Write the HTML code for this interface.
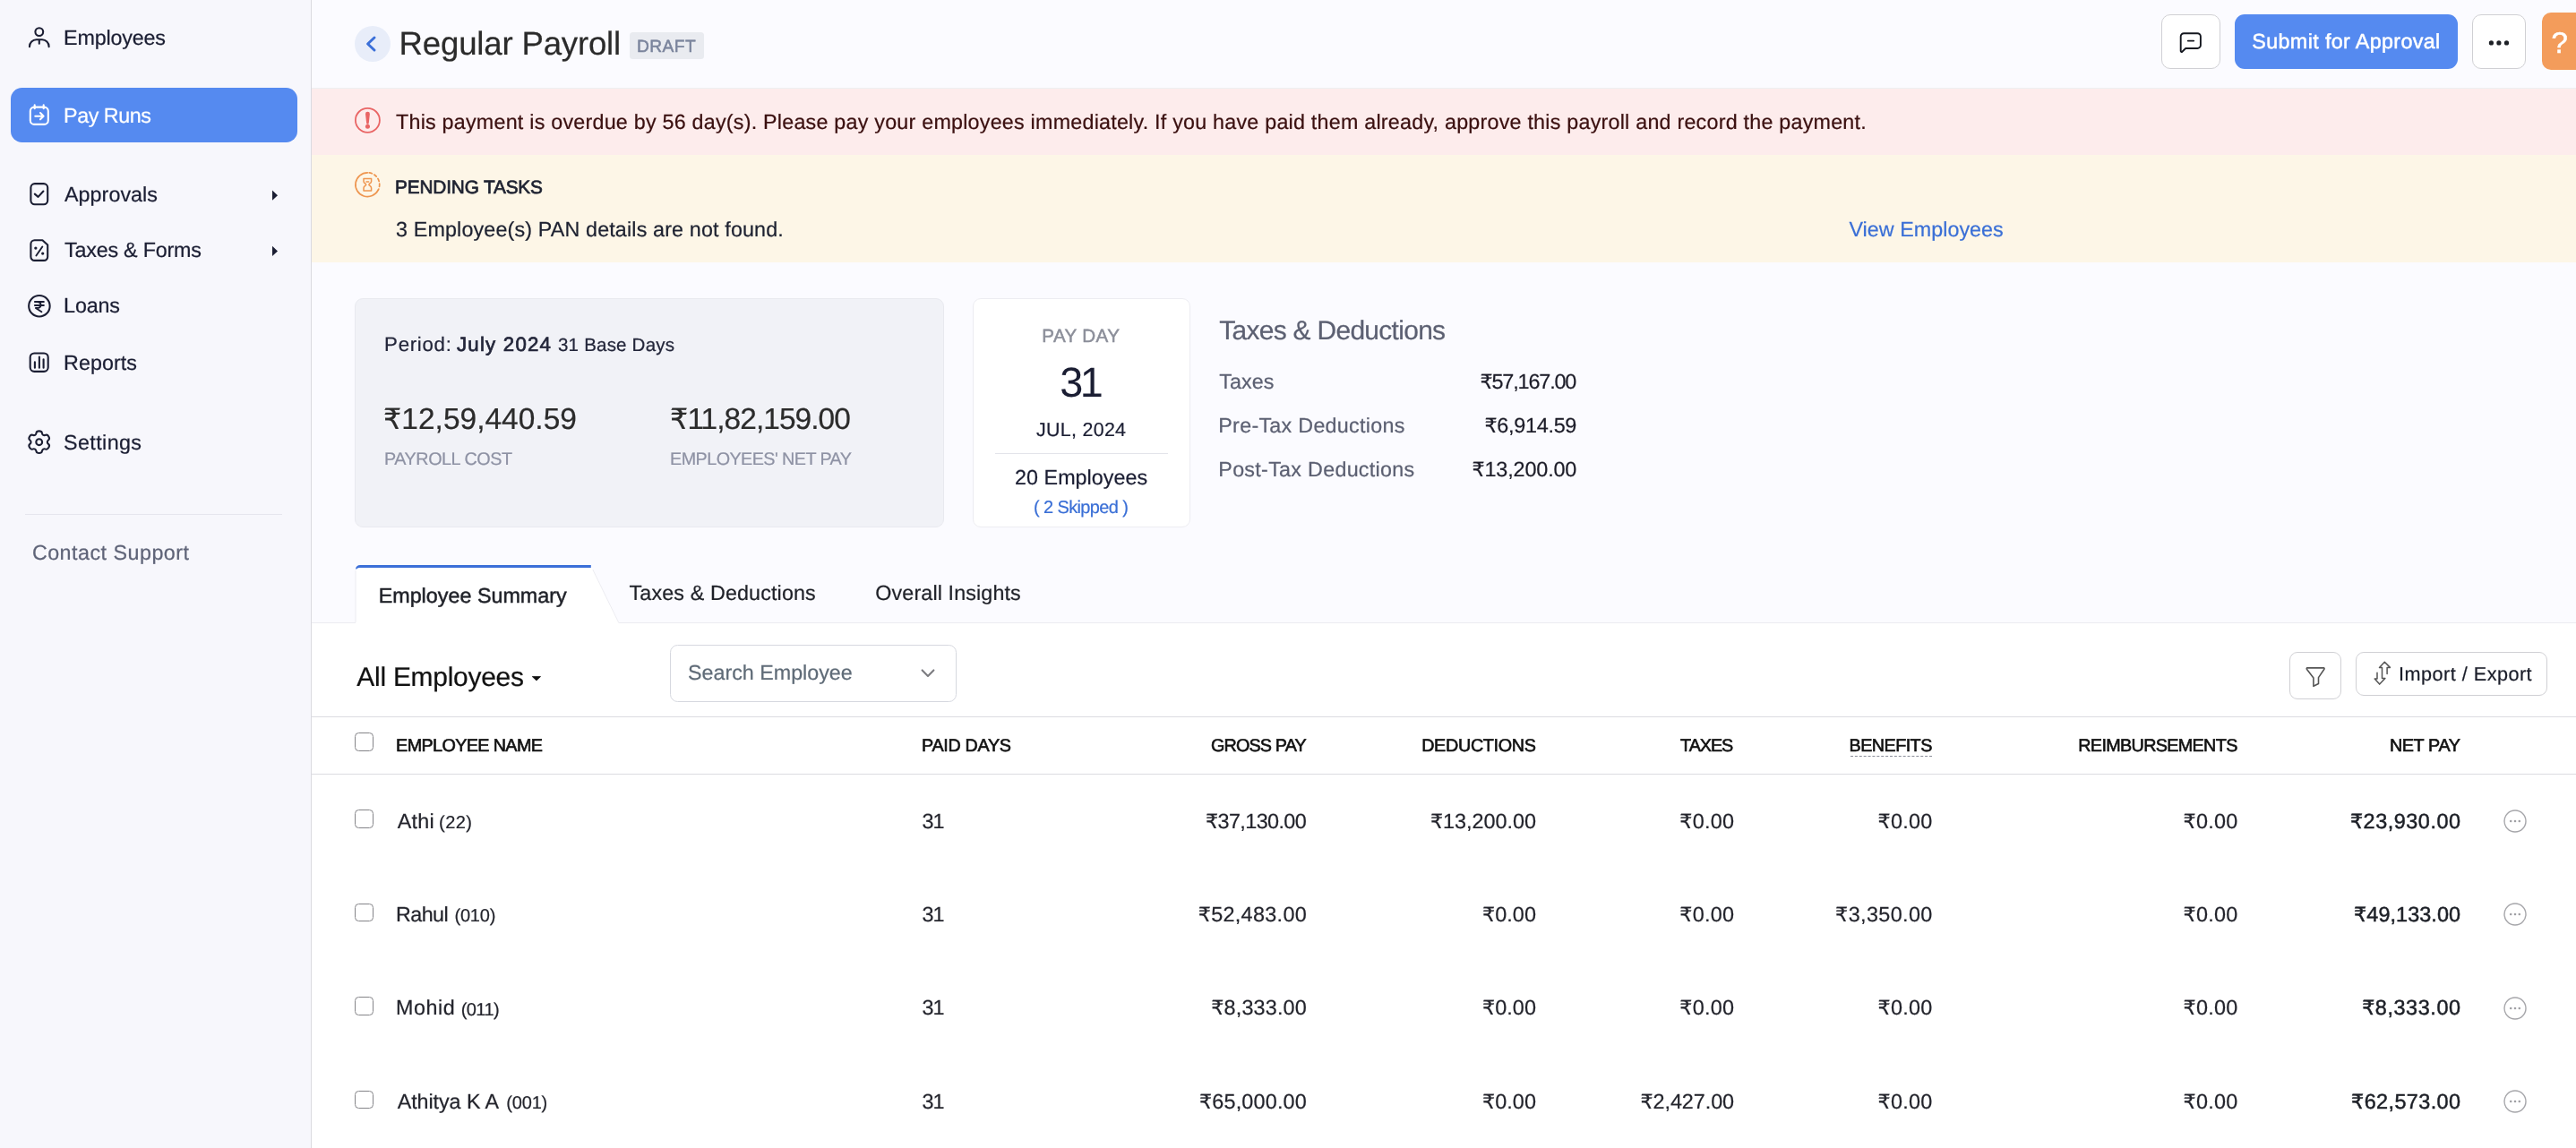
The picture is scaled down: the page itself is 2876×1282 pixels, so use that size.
<!doctype html>
<html lang="en"><head><meta charset="utf-8"><title>Regular Payroll</title>
<style>
*{box-sizing:border-box;margin:0;padding:0}
html,body{width:2876px;height:1282px;overflow:hidden;background:#fff}
@media (max-width:2000px){html{zoom:.5}}
body{font-family:"Liberation Sans", "DejaVu Sans", sans-serif;position:relative}
.grp{position:absolute;left:0;top:0;width:2876px;height:1282px;will-change:transform;pointer-events:none}
h1,h2,a,strong,em,button,label{font:inherit;color:inherit;text-decoration:none;background:none;border:0}
.t{position:absolute;white-space:nowrap;line-height:1;-webkit-text-stroke:.22px;text-rendering:geometricPrecision}
.r{font-family:"DejaVu Sans",sans-serif;font-size:.95em}

.b{position:absolute}
svg{position:absolute;overflow:visible}
.cb{position:absolute;width:20.6px;height:20.6px;border:1.9px solid #848488;border-radius:4.5px;background:#fff}
</style></head>
<body>
<div class="grp page-bg">
<div class="b" style="left:0px;top:0px;width:347px;height:1282px;background:#f7f7fc;"></div>
<div class="b" style="left:346.8px;top:0px;width:1.2px;height:1282px;background:#dadae0;"></div>
<div class="b" style="left:348px;top:0px;width:2528px;height:1282px;background:#fbfbff;"></div>
<div class="b" style="left:348px;top:695px;width:2528px;height:587px;background:#fff;"></div>
<div class="b" style="left:348px;top:172px;width:2528px;height:120.7px;background:#fdf6e7;"></div>
<div class="b" style="left:348px;top:98px;width:2528px;height:74.8px;background:#fdecec;"></div>
<div class="b" style="left:348.3px;top:97.6px;width:2528px;height:1px;background:#eef0f2;"></div>
<div class="b" style="left:348px;top:695px;width:2528px;height:1px;background:#ececf1;"></div>
</div>
<aside class="grp sidebar">
<div class="b" style="left:12px;top:98px;width:320px;height:61px;background:#558af0;border-radius:12.5px"></div>
<div class="b" style="left:28px;top:574px;width:287px;height:1px;background:#e6e6ee;"></div>
<svg style="left:30px;top:28px" width="28" height="28" viewBox="30 28 28 28"><g fill="none" stroke="#1b1e33" stroke-width="2.1" stroke-linecap="round" stroke-linejoin="round"><circle cx="43.8" cy="35.6" r="4.4"/><path d="M33 52.2v-.4a7.600 7.600 0 0 1 7.600-7.600h6.400a7.600 7.600 0 0 1 7.600 7.600v.4M43.800 44.400v4.400"/></g></svg>
<svg style="left:30px;top:114px" width="28" height="28" viewBox="30 114 28 28"><g fill="none" stroke="#fff" stroke-width="2.1" stroke-linecap="round" stroke-linejoin="round"><rect x="33.8" y="119.6" width="20" height="19.300" rx="4.400"/><path d="M38.700 117.400v3.800M48.700 117.400v3.800M39.300 129.700h9M45 126.100l3.600 3.600-3.600 3.600"/></g></svg>
<svg style="left:30px;top:202px" width="28" height="30" viewBox="30 202 28 30"><g fill="none" stroke="#1b1e33" stroke-width="2.1" stroke-linecap="round" stroke-linejoin="round"><rect x="34.4" y="205.1" width="18.800" height="23.100" rx="4.400"/><path d="M38.800 216.600l3.800 3.300 5.800-6.400"/></g></svg>
<svg style="left:30px;top:264px" width="28" height="30" viewBox="30 264 28 30"><g fill="none" stroke="#1b1e33" stroke-width="2.1" stroke-linecap="round" stroke-linejoin="round"><path d="M38.600 268.200h8.800l5.800 5.400v13.100a4.200 4.200 0 0 1-4.200 4.200h-10.400a4.200 4.200 0 0 1-4.200-4.200v-14.300a4.200 4.200 0 0 1 4.200-4.200z"/><path d="M47.300 275.500l-6.900 10" stroke-width="1.900"/></g><circle cx="39.850" cy="277.100" r="1.650" fill="#1b1e33"/><circle cx="47.700" cy="283.100" r="1.650" fill="#1b1e33"/></svg>
<svg style="left:30px;top:327px" width="28" height="30" viewBox="30 327 28 30"><g fill="none" stroke="#1b1e33" stroke-width="2.1" stroke-linecap="round" stroke-linejoin="round"><circle cx="43.900" cy="341.700" r="11.750"/><path d="M38.900 337h10M38.900 341h10M41.200 337c5.800 0 5.800 7 0 7h-1.300l6.500 4.300" stroke-width="1.900"/></g></svg>
<svg style="left:30px;top:390px" width="28" height="30" viewBox="30 390 28 30"><g fill="none" stroke="#1b1e33" stroke-width="2.1" stroke-linecap="round" stroke-linejoin="round"><rect x="33.700" y="394.500" width="20" height="20.400" rx="4.600"/><path d="M38.900 410.800v-6.400M43.900 410.800v-12.200M48.600 410.800v-9.600"/></g></svg>
<svg style="left:30px;top:479px" width="28" height="30" viewBox="30 479 28 30"><g fill="none" stroke="#1b1e33" stroke-width="2.1" stroke-linecap="round" stroke-linejoin="round"><path d="M48.26 485.81Q47.15 485.17 46.84 483.30Q46.53 481.42 43.70 481.42Q40.87 481.42 40.56 483.30Q40.25 485.17 39.14 485.81Q38.04 486.45 36.26 485.78Q34.48 485.11 33.07 487.56Q31.65 490.02 33.12 491.22Q34.59 492.42 34.59 493.70Q34.59 494.98 33.12 496.18Q31.65 497.38 33.07 499.84Q34.48 502.29 36.26 501.62Q38.04 500.95 39.14 501.59Q40.25 502.23 40.56 504.10Q40.87 505.98 43.70 505.98Q46.53 505.98 46.84 504.10Q47.15 502.23 48.26 501.59Q49.36 500.95 51.14 501.62Q52.92 502.29 54.33 499.84Q55.75 497.38 54.28 496.18Q52.81 494.98 52.81 493.70Q52.81 492.42 54.28 491.22Q55.75 490.02 54.33 487.56Q52.92 485.11 51.14 485.78Q49.36 486.45 48.26 485.81Z"/><circle cx="43.700" cy="493.700" r="3.400"/></g></svg>
<svg style="left:300px;top:208px" width="14" height="20" viewBox="300 208 14 20"><path d="M304 212.600l6 5.600-6 5.600z" fill="#1b1e33"/></svg>
<svg style="left:300px;top:270px" width="14" height="20" viewBox="300 270 14 20"><path d="M304 274.800l6 5.600-6 5.600z" fill="#1b1e33"/></svg>
<a class="t" style="left:71.1px;top:31px;font-size:23.3px;color:#1b1e33;letter-spacing:-0.169px;">Employees</a>
<a class="t" style="left:71.1px;top:118px;font-size:23.3px;color:#fff;letter-spacing:-0.459px;">Pay Runs</a>
<a class="t" style="left:72.0px;top:206px;font-size:23.3px;color:#1b1e33;letter-spacing:0.043px;">Approvals</a>
<a class="t" style="left:72.0px;top:268px;font-size:23.3px;color:#1b1e33;letter-spacing:-0.202px;">Taxes &amp; Forms</a>
<a class="t" style="left:71.1px;top:330px;font-size:23.3px;color:#1b1e33;letter-spacing:-0.152px;">Loans</a>
<a class="t" style="left:71.1px;top:394px;font-size:23.3px;color:#1b1e33;letter-spacing:0.054px;">Reports</a>
<a class="t" style="left:71.1px;top:483px;font-size:23.3px;color:#1b1e33;letter-spacing:0.388px;">Settings</a>
<a class="t" style="left:35.89px;top:606px;font-size:23.3px;color:#5f6478;letter-spacing:0.482px;">Contact Support</a>
</aside>
<header class="grp page-header">
<div class="b" style="left:396px;top:29px;width:40px;height:40px;background:#e8edf9;border-radius:50%"></div>
<svg style="left:396px;top:29px" width="40" height="40" viewBox="396 29 40 40"><path d="M418 42l-7.400 7 7.400 7" fill="none" stroke="#3b6fd8" stroke-width="3" stroke-linecap="round" stroke-linejoin="round"/></svg>
<div class="b" style="left:703px;top:36px;width:83px;height:30px;background:#e9ebf0;border-radius:3.5px"></div>
<div class="b" style="left:2413px;top:16px;width:66px;height:61.4px;background:#fff;border:1px solid #d0d0d4;border-radius:10px"></div>
<svg style="left:2430px;top:34px" width="32" height="28" viewBox="2430 34 32 28"><g fill="none" stroke="#14171f" stroke-width="1.900" stroke-linecap="round" stroke-linejoin="round"><path d="M2438.300 37.200h15a3.600 3.600 0 0 1 3.600 3.600v9.600a3.600 3.600 0 0 1-3.600 3.600h-13.100l-3.900 3.700a.950 .950 0 0 1-1.600-.7v-16.200a3.600 3.600 0 0 1 3.600-3.600z"/><path d="M2442.800 45.600h6.400"/></g></svg>
<div class="b" style="left:2495px;top:16px;width:249px;height:61.2px;background:#558af0;border-radius:11px"></div>
<div class="b" style="left:2760px;top:16px;width:60px;height:61.4px;background:#fff;border:1px solid #d0d0d4;border-radius:10px"></div>
<svg style="left:2775px;top:40px" width="30" height="16" viewBox="2775 40 30 16"><g fill="#1d2026"><circle cx="2781.400" cy="47.900" r="2.600"/><circle cx="2789.900" cy="47.900" r="2.600"/><circle cx="2798.500" cy="47.900" r="2.600"/></g></svg>
<div class="b" style="left:2838px;top:14px;width:50px;height:64px;background:#f39c5b;border-radius:10px"></div>
<h1 class="t" style="left:445.62px;top:31px;font-size:36.61px;color:#2b2b2b;letter-spacing:-0.192px;">Regular Payroll</h1>
<span class="t" style="left:710.89px;top:43px;font-size:19.2px;color:#7a849c;-webkit-text-stroke:.5px;letter-spacing:0.487px;">DRAFT</span>
<span class="t" style="left:2514.31px;top:35px;font-size:23.3px;color:#fff;-webkit-text-stroke:.5px;letter-spacing:0.372px;">Submit for Approval</span>
<span class="t" style="left:2848.6px;top:32px;font-size:32.92px;color:#fff;-webkit-text-stroke:.5px;">?</span>
</header>
<section class="grp alerts">
<svg style="left:394px;top:118px" width="32" height="32" viewBox="394 118 32 32"><circle cx="410.400" cy="134.300" r="13.500" fill="none" stroke="#e96565" stroke-width="1.800"/><path d="M408 127.200a2.450 2.450 0 0 1 4.900 0l-1.150 10.200a1.300 1.300 0 0 1-2.600 0z" fill="#e96565"/><circle cx="410.450" cy="141.300" r="2.500" fill="#e96565"/></svg>
<svg style="left:394px;top:190px" width="32" height="32" viewBox="394 190 32 32"><g fill="none" stroke="#ee9650" stroke-width="1.700" stroke-linecap="round" stroke-linejoin="round"><path d="M410.300 192.800a13.400 13.400 0 1 0 12 19.400"/><path d="M410.300 192.800a13.400 13.400 0 0 1 12 19.400" stroke-dasharray="3.200 2.700" stroke-dashoffset="-2"/><path d="M406 199.600h8.600v2.800c0 2.300-2.700 2.600-2.700 3.800s2.700 1.500 2.700 3.800v3h-8.600v-3c0-2.300 2.700-2.600 2.700-3.800s-2.700-1.500-2.700-3.800z" stroke-width="1.500"/><path d="M409 202.900h2.600" stroke-width="1.500"/></g></svg>
<span class="t" style="left:442.0px;top:125px;font-size:23.3px;color:#3b1010;letter-spacing:0.227px;">This payment is overdue by 56 day(s). Please pay your employees immediately. If you have paid them already, approve this payroll and record the payment.</span>
<span class="t" style="left:441.1px;top:200px;font-size:20.8px;color:#1d2130;-webkit-text-stroke:.7px;letter-spacing:-0.164px;">PENDING TASKS</span>
<span class="t" style="left:442.0px;top:245px;font-size:23.3px;color:#1d2130;letter-spacing:0.151px;">3 Employee(s) PAN details are not found.</span>
<a class="t" style="left:2064.42px;top:245px;font-size:23.3px;color:#3a6fd6;letter-spacing:0.04px;">View Employees</a>
</section>
<section class="grp summary">
<div class="b" style="left:396px;top:333px;width:658px;height:256px;background:#f1f2f7;border:1px solid #e8e9ef;border-radius:9px"></div>
<div class="b" style="left:1086px;top:333px;width:242.5px;height:256px;background:#fff;border:1px solid #ececf1;border-radius:9px"></div>
<div class="b" style="left:1111px;top:505.5px;width:193px;height:1.5px;background:#e3e4ea;"></div>
<span class="t" style="left:429.1px;top:374px;font-size:22.26px;color:#23263a;letter-spacing:0.708px;">Period:</span>
<strong class="t" style="left:510.0px;top:374px;font-size:22.26px;color:#23263a;-webkit-text-stroke:.7px;letter-spacing:1.212px;">July 2024</strong>
<span class="t" style="left:623.0px;top:376px;font-size:20.54px;color:#23263a;letter-spacing:0.197px;">31 Base Days</span>
<span class="t" style="left:428.1px;top:452px;font-size:33.44px;color:#2b2b2b;letter-spacing:0.037px;"><span class="r">₹</span>12,59,440.59</span>
<span class="t" style="left:748.12px;top:452px;font-size:33.44px;color:#2b2b2b;letter-spacing:-0.927px;"><span class="r">₹</span>11,82,159.00</span>
<span class="t" style="left:429.1px;top:504px;font-size:19.78px;color:#8e92a4;letter-spacing:-0.459px;">PAYROLL COST</span>
<span class="t" style="left:748.12px;top:504px;font-size:19.78px;color:#8e92a4;letter-spacing:-0.567px;">EMPLOYEES&#x27; NET PAY</span>
<span class="t" style="left:1163.36px;top:366px;font-size:20.6px;color:#8c8f9a;-webkit-text-stroke:.5px;letter-spacing:0.377px;">PAY DAY</span>
<span class="t" style="left:1183.16px;top:404px;font-size:46.82px;color:#1b1e33;-webkit-text-stroke:0;letter-spacing:-3.5px;">31</span>
<span class="t" style="left:1157.0px;top:470px;font-size:21.42px;color:#1b1e33;letter-spacing:0.301px;">JUL, 2024</span>
<span class="t" style="left:1133.05px;top:522px;font-size:23.3px;color:#1b1e33;letter-spacing:0.043px;">20 Employees</span>
<a class="t" style="left:1154.1px;top:558px;font-size:19.97px;color:#3a6fd6;letter-spacing:-0.61px;">( 2 Skipped )</a>
<h2 class="t" style="left:1361.21px;top:355px;font-size:29.95px;color:#5c6072;letter-spacing:-0.688px;">Taxes &amp; Deductions</h2>
<span class="t" style="left:1361.21px;top:415px;font-size:23.3px;color:#5c6072;letter-spacing:0.115px;">Taxes</span>
<span class="t" style="right:1116.78px;top:415px;font-size:23.41px;color:#1c1c28;letter-spacing:-1.153px;"><span class="r">₹</span>57,167.00</span>
<span class="t" style="left:1360.31px;top:464px;font-size:23.3px;color:#5c6072;letter-spacing:0.28px;">Pre-Tax Deductions</span>
<span class="t" style="right:1115.93px;top:464px;font-size:23.41px;color:#1c1c28;letter-spacing:-0.296px;"><span class="r">₹</span>6,914.59</span>
<span class="t" style="left:1360.31px;top:513px;font-size:23.3px;color:#5c6072;letter-spacing:0.291px;">Post-Tax Deductions</span>
<span class="t" style="right:1115.78px;top:513px;font-size:23.41px;color:#1c1c28;letter-spacing:-0.153px;"><span class="r">₹</span>13,200.00</span>
</section>
<nav class="grp tabs">
<svg style="left:396px;top:630px" width="300" height="68" viewBox="396 630 300 68"><path d="M397 696V637a5.500 5.500 0 0 1 5.500-5.500H655a8 8 0 0 1 7 4l29 60.500z" fill="#fff"/><path d="M690.800 695.500l-29-59.500" stroke="#ececf1" stroke-width="1" fill="none"/><path d="M397 635.400a5.200 5.200 0 0 1 5.200-4.500H659.800V633.900H401a4 4 0 0 0-3 1.500z" fill="#3b6fd8"/><path d="M397 637v58" stroke="#ececf1" stroke-width="1"/></svg>
<a class="t" style="left:422.68px;top:654px;font-size:23.3px;color:#1f2128;-webkit-text-stroke:.5px;letter-spacing:0.017px;">Employee Summary</a>
<a class="t" style="left:702.58px;top:651px;font-size:23.3px;color:#1f2128;letter-spacing:0.133px;">Taxes &amp; Deductions</a>
<a class="t" style="left:977.31px;top:651px;font-size:23.3px;color:#1f2128;letter-spacing:0.128px;">Overall Insights</a>
</nav>
<section class="grp toolbar">
<svg style="left:590px;top:750px" width="20" height="14" viewBox="590 750 20 14"><path d="M594.300 755.600h9.200l-4.600 4.300z" fill="#111" stroke="#111" stroke-width=".8" stroke-linejoin="round"/></svg>
<div class="b" style="left:748px;top:720px;width:320px;height:64px;background:#fff;border:1px solid #d6d8df;border-radius:8.5px"></div>
<svg style="left:1024px;top:742px" width="24" height="18" viewBox="1024 742 24 18"><path d="M1029.600 748.400l6.400 6.600 6.400-6.600" fill="none" stroke="#7c7c80" stroke-width="2.100" stroke-linecap="round" stroke-linejoin="round"/></svg>
<div class="b" style="left:2556px;top:728px;width:58px;height:52.5px;background:#fff;border:1px solid #d0d0d4;border-radius:9px"></div>
<svg style="left:2570px;top:740px" width="30" height="32" viewBox="2570 740 30 32"><path d="M2576 745.900h18.300a.8 .8 0 0 1 .6 1.300l-6.400 9.400v6.900l-5.600 2.800v-9.200l-7.500-9.900a.8 .8 0 0 1 .6-1.300z" fill="none" stroke="#555" stroke-width="1.600" stroke-linejoin="round"/></svg>
<div class="b" style="left:2630px;top:728px;width:214px;height:48.5px;background:#fff;border:1px solid #d0d0d4;border-radius:9px"></div>
<svg style="left:2648px;top:736px" width="26" height="32" viewBox="2648 736 26 32"><path d="M2665.100 752.400V745.400H2668.400L2662.300 739.300L2656.500 745.400H2659.500V757.600H2662.900L2656.700 764.100L2651.200 758H2654V751.300" fill="none" stroke="#555" stroke-width="1.500" stroke-linejoin="round" stroke-linecap="round"/></svg>
<h2 class="t" style="left:398.32px;top:742px;font-size:29.95px;color:#111;letter-spacing:-0.255px;">All Employees</h2>
<span class="t" style="left:768.1px;top:740px;font-size:23.3px;color:#5f6b77;letter-spacing:-0.021px;">Search Employee</span>
<span class="t" style="left:2678.1px;top:742px;font-size:21.63px;color:#1a1d29;letter-spacing:0.48px;">Import / Export</span>
</section>
<section class="grp employee-table">
<div class="b" style="left:348px;top:800px;width:2528px;height:1px;background:#dcdce1;"></div>
<div class="b" style="left:348px;top:864px;width:2528px;height:1px;background:#dcdce1;"></div>
<div class="b" style="left:2065.6px;top:843.5px;width:91px;height:0px;background:transparent;border-top:1.3px dashed #8a8d99"></div>
<div class="cb" style="left:396px;top:818px"></div>
<div class="cb" style="left:396px;top:904.3px"></div>
<svg style="left:2794px;top:902.9px" width="28" height="28" viewBox="2794 902.9 28 28"><circle cx="2808" cy="916.9" r="12" fill="#fff" stroke="#a6a6aa" stroke-width="1.400"/><g fill="#a0a0a4"><circle cx="2803.200" cy="916.9" r="1.300"/><circle cx="2808" cy="916.9" r="1.300"/><circle cx="2812.800" cy="916.9" r="1.300"/></g></svg>
<div class="cb" style="left:396px;top:1008.7px"></div>
<svg style="left:2794px;top:1007.3px" width="28" height="28" viewBox="2794 1007.3 28 28"><circle cx="2808" cy="1021.3" r="12" fill="#fff" stroke="#a6a6aa" stroke-width="1.400"/><g fill="#a0a0a4"><circle cx="2803.200" cy="1021.3" r="1.300"/><circle cx="2808" cy="1021.3" r="1.300"/><circle cx="2812.800" cy="1021.3" r="1.300"/></g></svg>
<div class="cb" style="left:396px;top:1113.1px"></div>
<svg style="left:2794px;top:1111.7px" width="28" height="28" viewBox="2794 1111.7 28 28"><circle cx="2808" cy="1125.7" r="12" fill="#fff" stroke="#a6a6aa" stroke-width="1.400"/><g fill="#a0a0a4"><circle cx="2803.200" cy="1125.7" r="1.300"/><circle cx="2808" cy="1125.7" r="1.300"/><circle cx="2812.800" cy="1125.7" r="1.300"/></g></svg>
<div class="cb" style="left:396px;top:1217.5px"></div>
<svg style="left:2794px;top:1216.1px" width="28" height="28" viewBox="2794 1216.1 28 28"><circle cx="2808" cy="1230.1" r="12" fill="#fff" stroke="#a6a6aa" stroke-width="1.400"/><g fill="#a0a0a4"><circle cx="2803.200" cy="1230.1" r="1.300"/><circle cx="2808" cy="1230.1" r="1.300"/><circle cx="2812.800" cy="1230.1" r="1.300"/></g></svg>
<span class="t" style="left:442.1px;top:824px;font-size:19.78px;color:#111;-webkit-text-stroke:.62px;letter-spacing:-0.626px;">EMPLOYEE NAME</span>
<span class="t" style="left:1029.1px;top:824px;font-size:19.78px;color:#111;-webkit-text-stroke:.62px;letter-spacing:-0.327px;">PAID DAYS</span>
<span class="t" style="right:1418.04px;top:824px;font-size:19.78px;color:#111;-webkit-text-stroke:.62px;letter-spacing:-0.825px;">GROSS PAY</span>
<span class="t" style="right:1161.37px;top:824px;font-size:19.78px;color:#111;-webkit-text-stroke:.62px;letter-spacing:-0.321px;">DEDUCTIONS</span>
<span class="t" style="right:941.85px;top:824px;font-size:19.78px;color:#111;-webkit-text-stroke:.62px;letter-spacing:-1.061px;">TAXES</span>
<span class="t" style="right:719.23px;top:824px;font-size:19.78px;color:#111;-webkit-text-stroke:.62px;letter-spacing:-0.551px;">BENEFITS</span>
<span class="t" style="right:378.35px;top:824px;font-size:19.78px;color:#111;-webkit-text-stroke:.62px;letter-spacing:-0.665px;">REIMBURSEMENTS</span>
<span class="t" style="right:129.36px;top:824px;font-size:19.78px;color:#111;-webkit-text-stroke:.62px;letter-spacing:-0.362px;">NET PAY</span>
<span class="t" style="left:443.74px;top:906px;font-size:23.3px;color:#23242c;letter-spacing:0.248px;">Athi</span>
<span class="t" style="left:490.1px;top:909px;font-size:20.06px;color:#23242c;letter-spacing:0.381px;">(22)</span>
<span class="t" style="left:1029.58px;top:906px;font-size:23.41px;color:#23242c;letter-spacing:-1.2px;">31</span>
<span class="t" style="right:1417.81px;top:906px;font-size:23.41px;color:#23242c;letter-spacing:-0.603px;"><span class="r">₹</span>37,130.00</span>
<span class="t" style="right:1161.08px;top:906px;font-size:23.41px;color:#23242c;letter-spacing:-0.025px;"><span class="r">₹</span>13,200.00</span>
<span class="t" style="right:939.62px;top:906px;font-size:23.41px;color:#23242c;letter-spacing:0.274px;"><span class="r">₹</span>0.00</span>
<span class="t" style="right:718.41px;top:906px;font-size:23.41px;color:#23242c;letter-spacing:0.274px;"><span class="r">₹</span>0.00</span>
<span class="t" style="right:377.41px;top:906px;font-size:23.41px;color:#23242c;letter-spacing:0.274px;"><span class="r">₹</span>0.00</span>
<span class="t" style="right:128.46px;top:906px;font-size:23.41px;color:#1c1f26;-webkit-text-stroke:.5px;letter-spacing:0.537px;"><span class="r">₹</span>23,930.00</span>
<span class="t" style="left:441.94px;top:1010px;font-size:23.3px;color:#23242c;letter-spacing:-0.531px;">Rahul</span>
<span class="t" style="left:507.52px;top:1013px;font-size:20.06px;color:#23242c;letter-spacing:-0.253px;">(010)</span>
<span class="t" style="left:1029.58px;top:1010px;font-size:23.41px;color:#23242c;letter-spacing:-1.2px;">31</span>
<span class="t" style="right:1416.9px;top:1010px;font-size:23.41px;color:#23242c;letter-spacing:0.314px;"><span class="r">₹</span>52,483.00</span>
<span class="t" style="right:1161.0px;top:1010px;font-size:23.41px;color:#23242c;letter-spacing:0.049px;"><span class="r">₹</span>0.00</span>
<span class="t" style="right:939.62px;top:1010px;font-size:23.41px;color:#23242c;letter-spacing:0.274px;"><span class="r">₹</span>0.00</span>
<span class="t" style="right:718.31px;top:1010px;font-size:23.41px;color:#23242c;letter-spacing:0.369px;"><span class="r">₹</span>3,350.00</span>
<span class="t" style="right:377.41px;top:1010px;font-size:23.41px;color:#23242c;letter-spacing:0.274px;"><span class="r">₹</span>0.00</span>
<span class="t" style="right:128.93px;top:1010px;font-size:23.41px;color:#1c1f26;-webkit-text-stroke:.5px;letter-spacing:0.069px;"><span class="r">₹</span>49,133.00</span>
<span class="t" style="left:441.94px;top:1114px;font-size:23.3px;color:#23242c;letter-spacing:0.574px;">Mohid</span>
<span class="t" style="left:514.73px;top:1118px;font-size:20.06px;color:#23242c;letter-spacing:-0.588px;">(011)</span>
<span class="t" style="left:1029.58px;top:1114px;font-size:23.41px;color:#23242c;letter-spacing:-1.2px;">31</span>
<span class="t" style="right:1417.05px;top:1114px;font-size:23.41px;color:#23242c;letter-spacing:0.158px;"><span class="r">₹</span>8,333.00</span>
<span class="t" style="right:1161.0px;top:1114px;font-size:23.41px;color:#23242c;letter-spacing:0.049px;"><span class="r">₹</span>0.00</span>
<span class="t" style="right:939.62px;top:1114px;font-size:23.41px;color:#23242c;letter-spacing:0.274px;"><span class="r">₹</span>0.00</span>
<span class="t" style="right:718.41px;top:1114px;font-size:23.41px;color:#23242c;letter-spacing:0.274px;"><span class="r">₹</span>0.00</span>
<span class="t" style="right:377.41px;top:1114px;font-size:23.41px;color:#23242c;letter-spacing:0.274px;"><span class="r">₹</span>0.00</span>
<span class="t" style="right:128.42px;top:1114px;font-size:23.41px;color:#1c1f26;-webkit-text-stroke:.5px;letter-spacing:0.579px;"><span class="r">₹</span>8,333.00</span>
<span class="t" style="left:443.74px;top:1219px;font-size:23.3px;color:#23242c;letter-spacing:-0.066px;">Athitya K A</span>
<span class="t" style="left:565.31px;top:1222px;font-size:20.06px;color:#23242c;letter-spacing:-0.201px;">(001)</span>
<span class="t" style="left:1029.58px;top:1219px;font-size:23.41px;color:#23242c;letter-spacing:-1.2px;">31</span>
<span class="t" style="right:1417.03px;top:1219px;font-size:23.41px;color:#23242c;letter-spacing:0.18px;"><span class="r">₹</span>65,000.00</span>
<span class="t" style="right:1161.0px;top:1219px;font-size:23.41px;color:#23242c;letter-spacing:0.049px;"><span class="r">₹</span>0.00</span>
<span class="t" style="right:939.97px;top:1219px;font-size:23.41px;color:#23242c;letter-spacing:-0.084px;"><span class="r">₹</span>2,427.00</span>
<span class="t" style="right:718.41px;top:1219px;font-size:23.41px;color:#23242c;letter-spacing:0.274px;"><span class="r">₹</span>0.00</span>
<span class="t" style="right:377.41px;top:1219px;font-size:23.41px;color:#23242c;letter-spacing:0.274px;"><span class="r">₹</span>0.00</span>
<span class="t" style="right:128.6px;top:1219px;font-size:23.41px;color:#1c1f26;-webkit-text-stroke:.5px;letter-spacing:0.402px;"><span class="r">₹</span>62,573.00</span>
</section>
</body></html>
